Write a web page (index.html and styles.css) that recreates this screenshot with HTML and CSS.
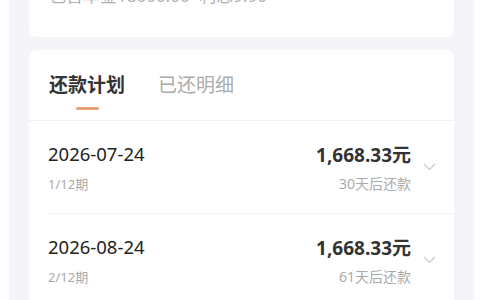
FILE: index.html
```html
<!DOCTYPE html>
<html lang="zh-CN">
<head>
<meta charset="utf-8">
<link rel="stylesheet" href="styles.css">
</head>
<body>
<div class="page">
  <div class="card summary">
    <div class="summary-text">包含本金18000.00+利息9.90</div>
  </div>
  <div class="card plan">
    <div class="tabs">
      <div class="tab active">还款计划<span class="bar"></span></div>
      <div class="tab">已还明细</div>
    </div>
    <div class="row">
      <div class="left">
        <div class="date">2026-07-24</div>
        <div class="sub">1/12期</div>
      </div>
      <div class="right">
        <div class="amount">1,668.33元</div>
        <div class="sub">30天后还款</div>
      </div>
      <svg class="chev" width="13" height="8" viewBox="0 0 13 8"><path d="M1 1 L6.5 6.5 L12 1" fill="none" stroke="#c9c9cc" stroke-width="1.2"/></svg>
    </div>
    <div class="row">
      <div class="left">
        <div class="date">2026-08-24</div>
        <div class="sub">2/12期</div>
      </div>
      <div class="right">
        <div class="amount">1,668.33元</div>
        <div class="sub">61天后还款</div>
      </div>
      <svg class="chev" width="13" height="8" viewBox="0 0 13 8"><path d="M1 1 L6.5 6.5 L12 1" fill="none" stroke="#c9c9cc" stroke-width="1.2"/></svg>
    </div>
  </div>
</div>
</body>
</html>
```

FILE: styles.css
```css
html, body {
  margin: 0;
  padding: 0;
  background: #fdfdff;
  height: 300px;
  overflow: hidden;
}
body {
  font-family: "Noto Sans", "Noto Sans CJK SC", sans-serif;
  color: #333;
}
.page {
  display: flow-root;
  margin: 0 6px 0 9px;
  padding: 0 20px;
  background: #f4f4f9;
  height: 300px;
}
.card {
  background: #fff;
  border-radius: 8px;
}
.summary {
  margin-top: -16px;
  padding: 0 20px 29px;
  border-radius: 0 0 8px 8px;
}
.summary-text {
  font-size: 17px;
  line-height: 24px;
  color: #b0b0b0;
}
.plan {
  margin-top: 13px;
  border-radius: 8px 8px 0 0;
}
.tabs {
  display: flex;
  gap: 33px;
  padding: 0 20px;
  height: 70px;
  align-items: center;
  border-bottom: 1px solid #f1f1f3;
}
.tab {
  position: relative;
  font-size: 19px;
  line-height: 26px;
  color: #aaaaaa;
}
.tab.active {
  color: #333;
  font-weight: 700;
}
.bar {
  position: absolute;
  left: 27px;
  top: 35px;
  width: 23px;
  height: 3px;
  border-radius: 2px;
  background: #e8a275;
}
.row {
  display: flex;
  align-items: center;
  height: 92px;
  padding: 0 18px 0 19px;
}
.row + .row {
  border-top: 1px solid #f1f1f3;
  margin-left: 19px;
  padding-left: 0;
}
.left {
  flex: 1;
}
.date {
  font-size: 18.5px;
  line-height: 24px;
  color: #222;
}
.left .sub {
  margin-top: 9px;
}
.sub {
  font-size: 13px;
  line-height: 18px;
  color: #aaaaaa;
}
.right {
  text-align: right;
}
.amount {
  font-size: 19px;
  line-height: 26px;
  font-weight: 700;
  color: #333;
}
.right .sub {
  margin-top: 7px;
  font-size: 14px;
}
.chev {
  margin-left: 12px;
}
```
